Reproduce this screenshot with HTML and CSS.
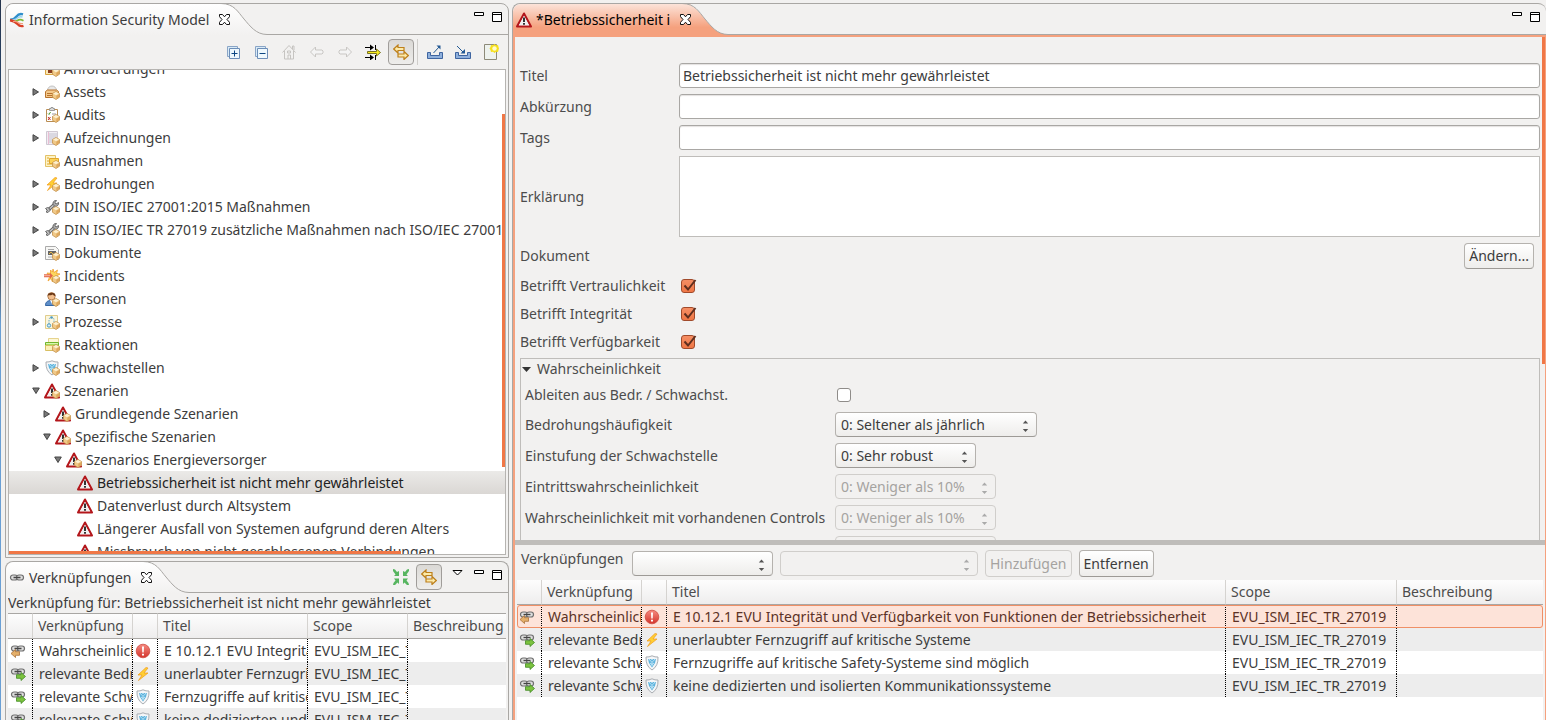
FILE: index.html
```html
<!DOCTYPE html>
<html lang="de">
<head>
<meta charset="utf-8">
<title>Information Security Model</title>
<link rel="stylesheet" href="styles.css">
</head>
<body>
<svg class="defs" width="0" height="0" aria-hidden="true">
  <defs>
    <linearGradient id="g-tab" x1="0" y1="0" x2="0" y2="1"><stop offset="0" stop-color="#ffffff"/><stop offset="1" stop-color="#f2f1f0"/></linearGradient>
    <linearGradient id="g-tab-active" x1="0" y1="0" x2="0" y2="1"><stop offset="0" stop-color="#fce3d9"/><stop offset=".75" stop-color="#f5a17e"/><stop offset="1" stop-color="#f5a17e"/></linearGradient>
    <linearGradient id="g-red" x1="0" y1="0" x2="0" y2="1"><stop offset="0" stop-color="#f58a80"/><stop offset="1" stop-color="#d4342b"/></linearGradient>
  </defs>
  <symbol id="cube" viewBox="0 0 16 16"><path d="M12 7.500l3.500 2v3.700L12 15.500l-3.500-2.200V9.500z" fill="#f0c988" stroke="#c4924a" stroke-width=".8" stroke-linejoin="round"/><path d="M9 9.600l3-1.600 3 1.600-3 1.700z" fill="#fdf0cf"/><path d="M12.300 11.800l2.700-1.500v2.700l-2.700 1.800z" fill="#dfa75c"/></symbol>
  <symbol id="warn" viewBox="0 0 16 16"><path d="M8 1.500L15 14.500H1z" fill="#fff" stroke="#b3161b" stroke-width="2" stroke-linejoin="round"/><path d="M8 4L12.600 13H3.400z" fill="#f0f0f0"/><path d="M7 5.500h2v4.500H7zM7 11h2v1.800H7z" fill="#333"/></symbol>
  <symbol id="warn-box" viewBox="0 0 16 16"><use href="#warn"/><use href="#cube"/></symbol>
  <symbol id="req" viewBox="0 0 16 16"><path d="M1.500 3.500h12v10h-12z" fill="#fbe8b6" stroke="#d9a441"/><path d="M4 8h4v4H4z" fill="#8a3d20"/><use href="#cube"/></symbol>
  <symbol id="asset" viewBox="0 0 16 16"><path d="M3.500 6.500a4.500 4.500 0 0 1 9 0z" fill="#e8e8e8" stroke="#c2c2c2"/><path d="M1.500 7.500l2-1.500h9l2 1.500v6h-13z" fill="#f3c98c" stroke="#b8732d"/><path d="M3 9.500h10M3 11.500h7" stroke="#b8732d"/><use href="#cube"/></symbol>
  <symbol id="audit" viewBox="0 0 16 16"><path d="M2.500 2.500h11v12h-11z" fill="#fff" stroke="#b98d52"/><path d="M5.500 2.500v-1h1.500v-1h2v1h1.500v2h-5z" fill="#ddd" stroke="#888" stroke-width=".8"/><path d="M4 6.500l1 1 1.500-2.500" stroke="#4a9b2c" fill="none"/><path d="M4 10l2.500 3M6.500 10L4 13" stroke="#c3302b"/><path d="M8 7h4M8 10h3" stroke="#999"/><use href="#cube"/></symbol>
  <symbol id="record" viewBox="0 0 16 16"><path d="M2.500 1.500h11v13h-11z" fill="#f0edf3" stroke="#cfc8d2"/><path d="M5 4h8M5 6h8M5 8h7M5 10h4M5 12h3" stroke="#b9b9c5" stroke-width=".8"/><path d="M4.500 2v12" stroke="#e7a8c4" stroke-width=".7"/><use href="#cube"/></symbol>
  <symbol id="except" viewBox="0 0 16 16"><path d="M1.500 2.500h10v11h-10z" fill="#fdf3c6" stroke="#e3c268"/><path d="M5.500 5.500h9v5h-9z" fill="#fbd257" stroke="#e0a62d"/><path d="M3 5h2M3 8h2M3 11h5" stroke="#e0a62d"/><use href="#cube"/></symbol>
  <symbol id="bolt" viewBox="0 0 16 16"><path d="M11 1.500L3 9h4l-3.500 5.500L13 7H9l4-5z" fill="#ffcf33" stroke="#f09a1a" stroke-width=".7"/></symbol>
  <symbol id="bolt-box" viewBox="0 0 16 16"><use href="#bolt"/><use href="#cube"/></symbol>
  <symbol id="wrench" viewBox="0 0 16 16"><path d="M3 12l8-7" stroke="#666" stroke-width="3.400"/><path d="M3 12l8-7" stroke="#c9c9c9" stroke-width="1.400"/><path d="M14.500 3.500l-2.500 1.500-1-1.200L12.500 1.500a3 3 0 0 0-3.300 4.200l1.500 1.500A3 3 0 0 0 14.500 3.500z" fill="#aaa" stroke="#555" stroke-width=".8"/><path d="M1.500 9.500l2-1 2 1 .5 2-2 2-2-.5 1.500-1.500z" fill="#bbb" stroke="#555" stroke-width=".8"/><use href="#cube"/></symbol>
  <symbol id="doc" viewBox="0 0 16 16"><path d="M1.500 1.500h10l3 3v10h-13z" fill="#f7f7f5" stroke="#aaa" stroke-linejoin="round"/><path d="M4 6h8v4H4z" fill="#666"/><path d="M5 9l2-2 2 2" stroke="#e6b84a" fill="none"/><path d="M4 4.500h6M4 12h5" stroke="#aaa"/><use href="#cube"/></symbol>
  <symbol id="incident" viewBox="0 0 16 16"><path d="M9 1l1 3.500L13.500 2l-1 3.500 3.500.500-3.500 2 2 4-4-1.500L8.500 14 7 10.500 4 13l1.500-4L3 5l3.500.300L6.500 2l2 2z" fill="#fcd65c" stroke="#f0a02e" stroke-width=".8"/><path d="M0 6.200h6V4.700l3 3-3 3V9.200H0z" fill="#e2674b"/><path d="M0 7.700h6" stroke="#f7b9a5"/><use href="#cube"/></symbol>
  <symbol id="person" viewBox="0 0 16 16"><path d="M1.500 14.500c0-4 2.500-5 6-5s6 1 6 5z" fill="#5f8fc9" stroke="#3567a5"/><path d="M6 9l2 4 1.500-4z" fill="#fff"/><circle cx="7.500" cy="5.300" r="3.700" fill="#f2bf8e" stroke="#9a5c2a" stroke-width=".7"/><path d="M3.500 5C3 .800 12 .3 11.500 5 9.500 5 9 3.500 8.500 3.500 6 5 5 3.500 3.500 5z" fill="#6d3a17"/><use href="#cube"/></symbol>
  <symbol id="process" viewBox="0 0 16 16"><path d="M1.500 1.500h12v13h-12z" fill="#fbf6dd" stroke="#e0cd8c"/><path d="M5 10V6q0-2.500 2.500-2.500T10 6v2" stroke="#6cabc8" fill="none" stroke-dasharray="1.500 1"/><circle cx="5" cy="11.500" r="1.700" fill="#d7effa" stroke="#4c9ac0"/><circle cx="7.500" cy="3.500" r="1.300" fill="#4c9ac0"/><use href="#cube"/></symbol>
  <symbol id="reaction" viewBox="0 0 16 16"><path d="M4.500 1.500h10v12h-10z" fill="#fdf7d5" stroke="#e6d38e"/><path d="M1.500 5.500h13v3h-13z" fill="#a5dd5c" stroke="#72b52c"/><path d="M1.500 8.500h8v5h-8z" fill="#fbf0b8" stroke="#d8bf62"/><path d="M2 6.500h12" stroke="#d9f5b0"/><use href="#cube"/></symbol>
  <symbol id="shield" viewBox="0 0 16 16"><path d="M8 .8q3 1.500 6 1.200Q14.500 11 8 15 1.500 11 2 2q3 .3 6-1.200z" fill="#f4f6f8" stroke="#a9adb2"/><path d="M4 4h3l1 1 1-1h3l-1 4-3 4.500L5 8z" fill="#5cb3dd"/><path d="M5 4l2 2.500M11 4L9 6.500M6 8l2 1.500L10 8M8 6v5" stroke="#d9f0fb" stroke-width=".8" fill="none"/></symbol>
  <symbol id="shield-box" viewBox="0 0 16 16"><use href="#shield"/><use href="#cube"/></symbol>
  <symbol id="stop" viewBox="0 0 16 16"><circle cx="8" cy="8" r="6.800" fill="url(#g-red)" stroke="#cf4a40" stroke-width=".8"/><path d="M7 3.500h2l-.3 6H7.300zM7 10.700h2v1.800H7z" fill="#fff"/></symbol>
  <symbol id="chain" viewBox="0 0 16 16"><rect x="1.500" y="5" width="7" height="5" rx="2.500" fill="#ddd" stroke="#6f6f6f" stroke-width="1.200"/><rect x="7.500" y="5" width="7" height="5" rx="2.500" fill="#ddd" stroke="#6f6f6f" stroke-width="1.200"/><path d="M4.500 7.500h7" stroke="#444" stroke-width="1.300"/></symbol>
  <symbol id="link-in" viewBox="0 0 16 16"><g transform="translate(0 -2)"><use href="#chain"/></g><path d="M1 10.500L5.500 6.500v2.200h4v3.600h-4v2.200z" fill="#e5b06a" stroke="#a9713a" stroke-width=".8"/></symbol>
  <symbol id="link-out" viewBox="0 0 16 16"><g transform="translate(0 -2)"><use href="#chain"/></g><path d="M15.500 10.500L11 6.500v2.200H6.500v3.600H11v2.200z" fill="#7cc23f" stroke="#3f8a22" stroke-width=".8"/></symbol>
  <symbol id="logo" viewBox="0 0 16 16"><path d="M14 2.300Q10 1 7.500 4.500T1 7.800" stroke="#2f8fcb" stroke-width="2.400" fill="none"/><path d="M13.500 5Q10.500 4 8.500 6T3 8" stroke="#9bd3f0" stroke-width="1.500" fill="none"/><path d="M14.500 8.700Q11 6.800 8.500 8.500T3 8.800" stroke="#7dba35" stroke-width="1.800" fill="none"/><path d="M14.500 13.800Q11 15 8.500 12T1 8.300" stroke="#d93f26" stroke-width="2.400" fill="none"/><path d="M14 11.500Q11 12 9 10.500T4 9.500" stroke="#f3a07f" stroke-width="1.200" fill="none"/></symbol>
  <symbol id="close" viewBox="0 0 11 11"><path d="M.5.500h3l2 2.300 2-2.300h3v2.200L8 5.500l2.500 2.800v2.200h-3l-2-2.300-2 2.300h-3V8.300L3 5.500.5 2.700z" fill="#fff" stroke="#111"/></symbol>
  <symbol id="min" viewBox="0 0 10 10"><path d="M.5.500h9v3h-9z" fill="#fff" stroke="#000"/></symbol>
  <symbol id="max" viewBox="0 0 10 10"><path d="M.5.500h9v9h-9zM.5 2.500h9" fill="#fff" stroke="#000"/></symbol>
  <symbol id="sync" viewBox="0 0 16 16"><path d="M.7 5L5 1v2.500h6v3H5V9zM15.300 11.500L11 7.500V10H5v3h6v2.500z" fill="#fdeaa8" stroke="#bd7f1a" stroke-width="1.200"/></symbol>
  <symbol id="arrow-pair" viewBox="0 0 7 12"><path d="M.8 3.500L3.500.5l2.700 3zM.8 9l2.700 3 2.700-3z" fill="currentColor"/></symbol>
  <symbol id="right" viewBox="0 0 8 8"><path d="M1 .7L6.500 4 1 7.300z" fill="#7a7a7a" stroke="#444"/></symbol>
  <symbol id="down" viewBox="0 0 8 8"><path d="M.7 1h6.600L4 6.500z" fill="#7a7a7a" stroke="#444"/></symbol>
</svg>

<main class="workbench">
  <div class="side">
    <section class="panel navigator">
      <header class="panel-head">
        <div class="tab"><svg class="icon"><use href="#logo"/></svg><span>Information Security Model</span><button class="close" aria-label="Schließen"><svg><use href="#close"/></svg></button></div>
        <svg class="curve" viewBox="0 0 46 31"><path d="M0 0C13 0 17 8 23 15S35 30.500 46 30.500V31H0z" fill="url(#g-tab)"/><path d="M0-.5C13-.5 17 8 23 15S35 30.500 46 30.500" fill="none" stroke="#a9a7a4"/></svg>
        <div class="head-tools"><button aria-label="Minimieren"><svg><use href="#min"/></svg></button><button aria-label="Maximieren"><svg><use href="#max"/></svg></button></div>
      </header>
      <div class="toolbar">
        <button aria-label="Alle aufklappen"><svg class="icon" viewBox="0 0 16 16"><path d="M2.500 2.500h10v10h-10z" fill="#d9ebf7" stroke="#8aa5c6"/><path d="M4.500 4.500h10v10h-10z" fill="#eef8fd" stroke="#6d8eb8"/><path d="M6.500 9.500h6M9.500 6.500v6" stroke="#0c4682"/></svg></button>
        <button aria-label="Alle zuklappen"><svg class="icon" viewBox="0 0 16 16"><path d="M2.500 2.500h10v10h-10z" fill="#d9ebf7" stroke="#8aa5c6"/><path d="M4.500 4.500h10v10h-10z" fill="#eef8fd" stroke="#6d8eb8"/><path d="M6.500 9.500h6" stroke="#0c4682"/></svg></button>
        <button disabled aria-label="Start"><svg class="icon" viewBox="0 0 16 16"><path d="M1.500 8.500L8 1.500l6.500 7M3.500 7v8h9V7M11.500 5V2h1.500v4M7 15v-4h2.500v4M6.500 7h3v2h-3z" fill="none" stroke="#c6c4c1"/></svg></button>
        <button disabled aria-label="Zurück"><svg class="icon" viewBox="0 0 16 16"><path d="M1.500 8l5-5v3h6.500l1 1v2l-1 1H6.500v3z" fill="#f4f4f4" stroke="#c9c7c4"/></svg></button>
        <button disabled aria-label="Vor"><svg class="icon" viewBox="0 0 16 16"><path d="M14.500 8l-5-5v3H3L2 7v2l1 1h6.500v3z" fill="#f4f4f4" stroke="#c9c7c4"/></svg></button>
        <button aria-label="Filter"><svg class="icon" viewBox="0 0 16 16"><path d="M0 3.500h6M0 13.500h6M10.500 1v5M10.500 11v5" stroke="#000"/><path d="M5 .5l4 3-4 3zM5 10.500l4 3-4 3z" fill="#000"/><path d="M2.500 7.500h9V5l4 3.500-4 3.500V9.500h-9z" fill="#f6ea1c" stroke="#6b6418" stroke-width=".9"/></svg></button>
        <button class="pressed" aria-pressed="true" aria-label="Mit Editor verknüpfen"><svg class="icon"><use href="#sync"/></svg></button>
        <span class="separator"></span>
        <button aria-label="Exportieren"><svg class="icon" viewBox="0 0 16 16"><path d="M.5 8.500h3v3h9v-3h3v6H.5z" fill="#8fb0dc" stroke="#3f65a0"/><path d="M6.500 9L12 3" stroke="#245a94"/><path d="M9.500 1.500h4v4z" fill="#245a94"/></svg></button>
        <button aria-label="Importieren"><svg class="icon" viewBox="0 0 16 16"><path d="M.5 8.500h3v3h9v-3h3v6H.5z" fill="#8fb0dc" stroke="#3f65a0"/><path d="M2 2l6 6" stroke="#245a94"/><path d="M10 5v4.500H5.500z" fill="#245a94"/></svg></button>
        <button aria-label="Neu"><svg class="icon" viewBox="0 0 16 16"><path d="M1.500.5h12v15h-12z" fill="#eef2ee" stroke="#8d8a78"/><path d="M11.500 0l1.500 1.200 2-.2.500 2 .5 1.500-.5 1.500-.5 2-2-.2-1.500 1.200L10 7.800 8 8l-.5-2-1-1.500L7.500 3 8 1l2 .2z" fill="#f6e01c"/><circle cx="11.500" cy="4.500" r="2.200" fill="#fffbd0"/></svg></button>
      </div>
      <div class="tree-frame">
        <ul class="tree" role="tree">
          <li><span class="twisty"></span><svg class="icon"><use href="#req"/></svg>Anforderungen</li>
          <li><svg class="twisty"><use href="#right"/></svg><svg class="icon"><use href="#asset"/></svg>Assets</li>
          <li><svg class="twisty"><use href="#right"/></svg><svg class="icon"><use href="#audit"/></svg>Audits</li>
          <li><svg class="twisty"><use href="#right"/></svg><svg class="icon"><use href="#record"/></svg>Aufzeichnungen</li>
          <li><span class="twisty"></span><svg class="icon"><use href="#except"/></svg>Ausnahmen</li>
          <li><svg class="twisty"><use href="#right"/></svg><svg class="icon"><use href="#bolt-box"/></svg>Bedrohungen</li>
          <li><svg class="twisty"><use href="#right"/></svg><svg class="icon"><use href="#wrench"/></svg>DIN ISO/IEC 27001:2015 Maßnahmen</li>
          <li><svg class="twisty"><use href="#right"/></svg><svg class="icon"><use href="#wrench"/></svg>DIN ISO/IEC TR 27019 zusätzliche Maßnahmen nach ISO/IEC 27001:2013</li>
          <li><svg class="twisty"><use href="#right"/></svg><svg class="icon"><use href="#doc"/></svg>Dokumente</li>
          <li><span class="twisty"></span><svg class="icon"><use href="#incident"/></svg>Incidents</li>
          <li><span class="twisty"></span><svg class="icon"><use href="#person"/></svg>Personen</li>
          <li><svg class="twisty"><use href="#right"/></svg><svg class="icon"><use href="#process"/></svg>Prozesse</li>
          <li><span class="twisty"></span><svg class="icon"><use href="#reaction"/></svg>Reaktionen</li>
          <li><svg class="twisty"><use href="#right"/></svg><svg class="icon"><use href="#shield-box"/></svg>Schwachstellen</li>
          <li><svg class="twisty"><use href="#down"/></svg><svg class="icon"><use href="#warn-box"/></svg>Szenarien</li>
          <li class="level-1"><svg class="twisty"><use href="#right"/></svg><svg class="icon"><use href="#warn-box"/></svg>Grundlegende Szenarien</li>
          <li class="level-1"><svg class="twisty"><use href="#down"/></svg><svg class="icon"><use href="#warn-box"/></svg>Spezifische Szenarien</li>
          <li class="level-2"><svg class="twisty"><use href="#down"/></svg><svg class="icon"><use href="#warn-box"/></svg>Szenarios Energieversorger</li>
          <li class="level-3 selected"><span class="twisty"></span><svg class="icon"><use href="#warn"/></svg>Betriebssicherheit ist nicht mehr gewährleistet</li>
          <li class="level-3"><span class="twisty"></span><svg class="icon"><use href="#warn"/></svg>Datenverlust durch Altsystem</li>
          <li class="level-3"><span class="twisty"></span><svg class="icon"><use href="#warn"/></svg>Längerer Ausfall von Systemen aufgrund deren Alters</li>
          <li class="level-3"><span class="twisty"></span><svg class="icon"><use href="#warn"/></svg>Missbrauch von nicht geschlossenen Verbindungen</li>
        </ul>
        <span class="bar-v"></span><span class="bar-h"></span>
      </div>
    </section>

    <section class="panel links">
      <header class="panel-head">
        <div class="tab"><svg class="icon"><use href="#chain"/></svg><span>Verknüpfungen</span><button class="close" aria-label="Schließen"><svg><use href="#close"/></svg></button></div>
        <svg class="curve" viewBox="0 0 46 31"><path d="M0 0C13 0 17 8 23 15S35 30.500 46 30.500V31H0z" fill="url(#g-tab)"/><path d="M0-.5C13-.5 17 8 23 15S35 30.500 46 30.500" fill="none" stroke="#a9a7a4"/></svg>
        <div class="head-tools wide">
          <button class="tool" aria-label="Zusammenführen"><svg class="icon" viewBox="0 0 16 16"><path d="M0 0l2 .5L4 3l2-1v5H1l1.500-1.500L0 2zM16 0l-2 .5L12 3l-2-1v5h5l-1.500-1.500L16 2zM0 16l.5-2L2.500 11.500 1 9.500h5V15l-1.500-1.500L2 16zM16 16l-.5-2-2-2.500L15 9.500h-5V15l1.500-1.500L14 16z" fill="#57b560"/></svg></button>
          <button class="tool pressed" aria-pressed="true" aria-label="Mit Editor verknüpfen"><svg class="icon"><use href="#sync"/></svg></button>
          <button class="menu" aria-label="Menü"><svg viewBox="0 0 11 10"><path d="M1 .5h9L5.500 5z" fill="#fff" stroke="#000"/></svg></button>
          <button aria-label="Minimieren"><svg><use href="#min"/></svg></button><button aria-label="Maximieren"><svg><use href="#max"/></svg></button>
        </div>
      </header>
      <p class="caption">Verknüpfung für: Betriebssicherheit ist nicht mehr gewährleistet</p>
      <div class="table-area">
        <table class="grid small">
          <colgroup><col class="c-icon"><col class="c-rel"><col class="c-icon"><col class="c-title"><col class="c-scope"><col></colgroup>
          <thead><tr><th></th><th>Verknüpfung</th><th></th><th>Titel</th><th>Scope</th><th>Beschreibung</th></tr></thead>
          <tbody>
            <tr><td><svg class="icon"><use href="#link-in"/></svg></td><td>Wahrscheinlichkeit</td><td><svg class="icon"><use href="#stop"/></svg></td><td>E 10.12.1 EVU Integrität und Verfügbarkeit</td><td>EVU_ISM_IEC_TR_27019</td><td></td></tr>
            <tr><td><svg class="icon"><use href="#link-out"/></svg></td><td>relevante Bedrohung</td><td><svg class="icon"><use href="#bolt"/></svg></td><td>unerlaubter Fernzugriff auf kritische Systeme</td><td>EVU_ISM_IEC_TR_27019</td><td></td></tr>
            <tr><td><svg class="icon"><use href="#link-out"/></svg></td><td>relevante Schwachstelle</td><td><svg class="icon"><use href="#shield"/></svg></td><td>Fernzugriffe auf kritische Safety-Systeme</td><td>EVU_ISM_IEC_TR_27019</td><td></td></tr>
            <tr><td><svg class="icon"><use href="#link-out"/></svg></td><td>relevante Schwachstelle</td><td><svg class="icon"><use href="#shield"/></svg></td><td>keine dedizierten und isolierten</td><td>EVU_ISM_IEC_TR_27019</td><td></td></tr>
          </tbody>
        </table>
      </div>
    </section>
  </div>

  <section class="panel editor">
    <header class="panel-head">
      <div class="tab active"><svg class="icon"><use href="#warn"/></svg><span>*Betriebssicherheit i</span><button class="close" aria-label="Schließen"><svg><use href="#close"/></svg></button></div>
      <svg class="curve" viewBox="0 0 46 31"><path d="M0 0C13 0 17 8 23 15S35 30.500 46 30.500V31H0z" fill="url(#g-tab-active)"/><path d="M0-.5C13-.5 17 8 23 15S35 30.500 46 30.500" fill="none" stroke="#a9a7a4"/></svg>
      <div class="head-tools"><button aria-label="Minimieren"><svg><use href="#min"/></svg></button><button aria-label="Maximieren"><svg><use href="#max"/></svg></button></div>
    </header>
    <div class="editor-body">
      <form class="form-area">
        <div class="fields">
          <label for="titel">Titel</label><input type="text" id="titel" value="Betriebssicherheit ist nicht mehr gewährleistet">
          <label for="abk">Abkürzung</label><input type="text" id="abk">
          <label for="tags">Tags</label><input type="text" id="tags">
          <label for="erkl">Erklärung</label><textarea id="erkl"></textarea>
          <label for="dok">Dokument</label><button type="button" class="button change" id="dok">Ändern...</button>
          <label for="vert">Betrifft Vertraulichkeit</label><span class="check"><input type="checkbox" id="vert" checked><svg viewBox="0 0 16 16"><path d="M3.500 7.500L7 11.500 14.500 2" /></svg></span>
          <label for="integ">Betrifft Integrität</label><span class="check"><input type="checkbox" id="integ" checked><svg viewBox="0 0 16 16"><path d="M3.500 7.500L7 11.500 14.500 2" /></svg></span>
          <label for="verf">Betrifft Verfügbarkeit</label><span class="check"><input type="checkbox" id="verf" checked><svg viewBox="0 0 16 16"><path d="M3.500 7.500L7 11.500 14.500 2" /></svg></span>
        </div>
        <section class="group">
          <h2><svg viewBox="0 0 9 5"><path d="M0 0h9L4.500 5z" fill="#333"/></svg>Wahrscheinlichkeit</h2>
          <div class="group-fields">
            <label for="abl">Ableiten aus Bedr. / Schwachst.</label><span class="check"><input type="checkbox" id="abl"></span>
            <label for="haeuf">Bedrohungshäufigkeit</label><span class="select w-long"><select id="haeuf"><option>0: Seltener als jährlich</option></select><svg><use href="#arrow-pair"/></svg></span>
            <label for="einst">Einstufung der Schwachstelle</label><span class="select w-short"><select id="einst"><option>0: Sehr robust</option></select><svg><use href="#arrow-pair"/></svg></span>
            <label for="eintr">Eintrittswahrscheinlichkeit</label><span class="select w-mid off"><select id="eintr" disabled><option>0: Weniger als 10%</option></select><svg><use href="#arrow-pair"/></svg></span>
            <label for="contr">Wahrscheinlichkeit mit vorhandenen Controls</label><span class="select w-mid off"><select id="contr" disabled><option>0: Weniger als 10%</option></select><svg><use href="#arrow-pair"/></svg></span>
            <span></span><span class="select w-mid off"><select disabled aria-label="Wahrscheinlichkeit"><option></option></select></span>
          </div>
        </section>
        <span class="bar-v"></span>
      </form>
      <div class="splitter"></div>
      <div class="relations">
        <div class="relation-tools">
          <label for="rel">Verknüpfungen</label>
          <span class="select w-short"><select id="rel"><option></option></select><svg><use href="#arrow-pair"/></svg></span>
          <span class="select w-target off"><select disabled aria-label="Ziel"><option></option></select><svg><use href="#arrow-pair"/></svg></span>
          <button class="button" disabled>Hinzufügen</button>
          <button class="button">Entfernen</button>
        </div>
        <div class="table-area">
          <table class="grid large">
            <colgroup><col class="c-icon"><col class="c-rel"><col class="c-icon"><col class="c-title"><col class="c-scope"><col></colgroup>
            <thead><tr><th></th><th>Verknüpfung</th><th></th><th>Titel</th><th>Scope</th><th>Beschreibung</th></tr></thead>
            <tbody>
              <tr class="selected"><td><svg class="icon"><use href="#link-in"/></svg></td><td>Wahrscheinlichkeit</td><td><svg class="icon"><use href="#stop"/></svg></td><td>E 10.12.1 EVU Integrität und Verfügbarkeit von Funktionen der Betriebssicherheit</td><td>EVU_ISM_IEC_TR_27019</td><td></td></tr>
              <tr><td><svg class="icon"><use href="#link-out"/></svg></td><td>relevante Bedrohung</td><td><svg class="icon"><use href="#bolt"/></svg></td><td>unerlaubter Fernzugriff auf kritische Systeme</td><td>EVU_ISM_IEC_TR_27019</td><td></td></tr>
              <tr><td><svg class="icon"><use href="#link-out"/></svg></td><td>relevante Schwachstelle</td><td><svg class="icon"><use href="#shield"/></svg></td><td>Fernzugriffe auf kritische Safety-Systeme sind möglich</td><td>EVU_ISM_IEC_TR_27019</td><td></td></tr>
              <tr><td><svg class="icon"><use href="#link-out"/></svg></td><td>relevante Schwachstelle</td><td><svg class="icon"><use href="#shield"/></svg></td><td>keine dedizierten und isolierten Kommunikationssysteme</td><td>EVU_ISM_IEC_TR_27019</td><td></td></tr>
            </tbody>
          </table>
        </div>
      </div>
    </div>
  </section>
</main>
</body>
</html>
```
FILE: styles.css
```css
* { box-sizing: border-box; }

body {
  margin: 0;
  height: 100vh;
  overflow: hidden;
  background: #f2f1f0;
  color: #3c3c3c;
  font: 14px/20px "Noto Sans", "Open Sans", sans-serif;
}

.defs { position: absolute; }

button, input, select, textarea { font: inherit; color: inherit; margin: 0; }

svg { display: block; flex: none; }
.icon { width: 16px; height: 16px; }

.workbench {
  height: 100%;
  display: grid;
  grid-template-columns: 504fr 1034fr;
  grid-template-rows: minmax(0, 1fr);
  gap: 3px;
  padding: 3px 0 0 4px;
  border-left: 1px solid;
  border-image: linear-gradient(#26344c, #2b5c8f 30%, #333 36%, #6a9fd4 45%, #6a9fd4) 1;
}

.side { display: flex; flex-direction: column; gap: 3px; min-width: 0; }

.panel {
  display: flex;
  flex-direction: column;
  min-width: 0;
  min-height: 0;
  border: 1px solid #a9a7a4;
  border-radius: 8px 8px 0 0;
}
.navigator { flex: 553 1 0; }
.links { flex: 158 1 0; border-bottom: 0; overflow: hidden; }
.editor { border-bottom: 0; border-right: 0; overflow: hidden; }

/* Tab strip */
.panel-head { display: flex; flex: none; height: 31px; }
.tab {
  display: flex;
  align-items: center;
  gap: 4px;
  padding-left: 3px;
  white-space: nowrap;
  border-radius: 8px 0 0 0;
  background: linear-gradient(#fff, #f2f1f0);
}
.tab.active { color: #000; background: linear-gradient(#fce3d9, #f5a17e 75%); }
.close { position: relative; margin-left: 6px; padding: 0; border: 0; background: none; }
.close svg { width: 11px; height: 11px; }
.curve { width: 46px; height: 31px; margin-left: -9px; overflow: visible; }
.head-tools {
  flex: 1;
  display: flex;
  justify-content: flex-end;
  gap: 8px;
  padding: 8px 6px 0 0;
  border-bottom: 1px solid #a9a7a4;
}
.head-tools button { height: 10px; padding: 0; border: 0; background: none; }
.head-tools svg { width: 10px; height: 10px; }
.head-tools.wide { padding-top: 2px; }
.head-tools.wide button { margin-top: 6px; }
.head-tools .menu { margin-right: 3px; }
.head-tools .menu svg { width: 11px; }
.head-tools.wide .tool {
  width: 26px;
  height: 26px;
  margin: 0 -6px 0 0;
  display: grid;
  place-items: center;
}
.head-tools .tool svg { width: 16px; height: 16px; }
.toolbar .pressed, .head-tools.wide .pressed {
  border: 1px solid #a09d9a;
  border-radius: 4px;
  background: linear-gradient(#dbd9d6, #eeedeb);
}
.head-tools.wide .pressed { margin-right: 2px; }

/* Navigator */
.toolbar { display: flex; flex: none; justify-content: flex-end; align-items: center; height: 34px; padding-right: 3px; }
.toolbar button { display: grid; place-items: center; width: 26px; height: 26px; margin: 0 1px; padding: 0; border: 0; background: none; }
.separator { width: 1px; height: 26px; margin: 0 3px 0 2px; background: #d0cecb; }

.tree-frame {
  position: relative;
  flex: 1;
  min-height: 0;
  margin: 0 2px 2px;
  overflow: hidden;
  border: 1px solid #b6b4b1;
  background: #fff;
}
.tree { list-style: none; margin: -13px 0 0; padding: 0; }
.tree li { display: flex; align-items: center; height: 23px; padding-left: 23px; white-space: nowrap; }
.tree .icon { margin-right: 4px; }
.tree .level-1 { padding-left: 34px; }
.tree .level-2 { padding-left: 45px; }
.tree .level-3 { padding-left: 56px; }
.tree .selected { color: #222; background: linear-gradient(#ebeae8, #dad7d4); }
.twisty { width: 8px; height: 8px; margin-right: 4px; }

.bar-v, .bar-h { position: absolute; background: #f07746; }
.tree-frame .bar-v { right: 0; top: 9%; width: 3px; height: 73%; }
.bar-h { left: 0; bottom: 0; width: 79%; height: 3px; }

/* Tables */
.caption { margin: 0 2px; white-space: nowrap; overflow: hidden; flex: none; }
.table-area { flex: 1; min-height: 0; margin: 0 2px; overflow: hidden; background: #fff; }
.grid { width: 100%; table-layout: fixed; border-collapse: separate; border-spacing: 0; }
.c-icon { width: 25px; }
.c-rel { width: 100px; }
.small .c-title { width: 150px; }
.small .c-scope { width: 100px; }
.large .c-title { width: 559px; }
.large .c-scope { width: 171px; }
.grid th, .grid td { height: 23px; padding: 0 0 0 6px; overflow: hidden; white-space: nowrap; text-align: left; }
.grid th {
  height: 25px;
  padding-left: 5px;
  font-weight: normal;
  color: #4c4c4c;
  background: linear-gradient(#fdfdfd, #eeeded);
  border-right: 1px solid #d5d3d0;
  border-bottom: 1px solid #a9a7a4;
}
.small th { height: 26px; border-top: 1px solid #a9a7a4; }
.grid td { border-right: 1px dotted #000; }
.grid th:last-child, .grid td:last-child { border-right: 0; }
.grid td:nth-child(1), .grid td:nth-child(3) { padding-left: 2px; }
.grid tr:nth-child(even) td { background: #ededed; }
.grid .selected td { background: #fde3d9; color: #5c3226; }
.grid .selected { outline: 1px solid #ef8f66; outline-offset: -1px; border-radius: 3px; }

/* Editor */
.editor-body {
  flex: 1;
  min-height: 0;
  display: flex;
  flex-direction: column;
  border: solid #f5a17e;
  border-width: 2px 1px 0 2px;
}
.form-area { position: relative; flex: 477 1 0; min-height: 0; overflow: hidden; padding: 26px 5px 0; }
.form-area .bar-v { right: 0; top: 0; width: 3px; height: 65%; }
.fields { display: grid; grid-template-columns: 159px 1fr; row-gap: 6px; align-items: center; }
label, h2 { color: #4c4c4c; white-space: nowrap; }

input[type="text"], textarea {
  width: 100%;
  height: 25px;
  padding: 0 3px;
  border: 1px solid #a9a7a4;
  border-radius: 3px;
  background: #fff;
  box-shadow: inset 0 1px 1px #e4e2e0;
}
.fields textarea { height: 81px; display: block; resize: none; border-color: #bfbdba; border-radius: 0; box-shadow: none; }

.button {
  height: 27px;
  padding: 0 4px;
  border: 1px solid #b5b2ae;
  border-bottom-color: #9d9a96;
  border-radius: 4px;
  background: linear-gradient(#fff, #eeedeb);
}
.button:disabled { color: #a5a3a0; border-color: #d0cecb; background: #f2f1f0; }
.change { height: 26px; justify-self: end; margin-right: 6px; }

.check { display: grid; width: 18px; height: 22px; align-items: center; }
.check > * { grid-area: 1 / 1; }
.check input { appearance: none; width: 14px; height: 14px; margin-left: 2px; border: 1px solid #8f8c89; border-radius: 3px; background: #fff; }
.check input:checked { border-color: #a14a2a; background: linear-gradient(#f58e64, #f07746); }
.check svg { width: 16px; height: 16px; margin-left: 2px; pointer-events: none; }
.check path { fill: none; stroke: #5f2f1f; stroke-width: 2; }

.group { margin-top: 5px; border: 1px solid #bfbdba; }
h2 { display: flex; align-items: center; gap: 6px; margin: 0; padding-left: 1px; font: inherit; }
h2 svg { width: 9px; height: 5px; }
.group-fields { display: grid; grid-template-columns: 310px 1fr; row-gap: 6px; align-items: center; padding: 4px; }
.group-fields .check { height: 23px; }

.select { display: grid; align-items: center; }
.select > * { grid-area: 1 / 1; }
.select svg { width: 7px; height: 12px; margin: 2px 8px 0 0; justify-self: end; color: #555; pointer-events: none; }
.select select {
  appearance: none;
  width: 100%;
  height: 25px;
  padding: 0 5px;
  border: 1px solid #b5b2ae;
  border-bottom-color: #9d9a96;
  border-radius: 4px;
  background: linear-gradient(#fff, #eeedeb);
}
.off select { color: #a5a3a0; opacity: 1; border-color: #d0cecb; background: #f2f1f0; }
.off svg { color: #aaa; }
.w-long { width: 202px; }
.w-target { width: 198px; }
.w-mid { width: 161px; }
.w-short { width: 141px; }

.splitter { flex: none; height: 5px; background: #bfbdba; }
.relations { flex: 175 1 0; min-height: 0; display: flex; flex-direction: column; }
.relation-tools { display: flex; flex: none; align-items: center; gap: 7px; height: 35px; padding: 2px 0 0 6px; }
.relation-tools label { flex: none; width: 104px; align-self: flex-start; margin-top: 2px; }
```
